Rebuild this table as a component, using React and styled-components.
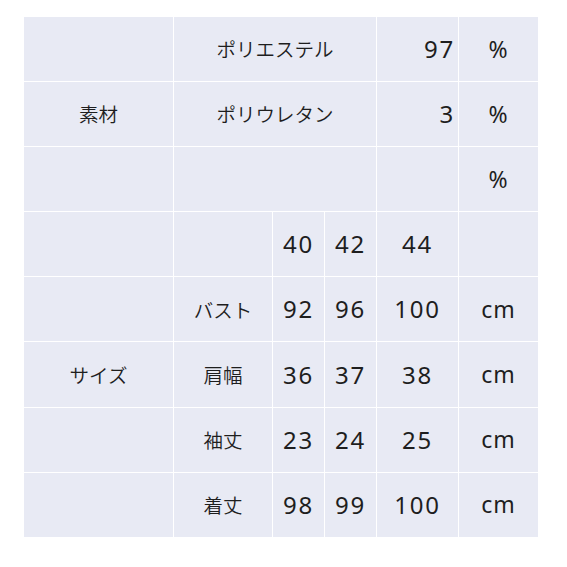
import React from "react";
import styled, { createGlobalStyle } from "styled-components";

const GlobalStyle = createGlobalStyle`
  html, body {
    margin: 0;
    background: #ffffff;
  }
  body {
    padding: 16px 0 0 23px;
    font-family: "Noto Sans CJK JP", sans-serif;
    color: #1e1e1e;
  }
`;

const Table = styled.table`
  width: 515px;
  border-collapse: collapse;
  table-layout: fixed;
  background: #e8eaf4;
`;

const Col = styled.col`
  width: ${(p) => p.$w}px;
`;

const Cell = styled.td`
  height: 64.1px;
  padding: 0 ${(p) => (p.$align === "right" ? "3px" : "0")} 0 0;
  border: 1px solid #ffffff;
  text-align: ${(p) => p.$align || "center"};
  vertical-align: middle;
  font-size: 19.5px;
  font-weight: 350;
  line-height: 1;
`;

const Num = styled.span`
  font-family: "Noto Sans", sans-serif;
  font-size: 24px;
  letter-spacing: 1.8px;
  font-weight: 400;
`;

const Unit = styled.span`
  font-family: "Noto Sans", sans-serif;
  font-weight: 400;
  font-size: 23px;
  letter-spacing: 1px;
`;

const sizeRows = [
  { label: "", name: "", v: ["40", "42", "44"], unit: "" },
  { label: "", name: "バスト", v: ["92", "96", "100"], unit: "cm" },
  { label: "サイズ", name: "肩幅", v: ["36", "37", "38"], unit: "cm" },
  { label: "", name: "袖丈", v: ["23", "24", "25"], unit: "cm" },
  { label: "", name: "着丈", v: ["98", "99", "100"], unit: "cm" },
];

const materialRows = [
  { label: "", name: "ポリエステル", pct: "97" },
  { label: "素材", name: "ポリウレタン", pct: "3" },
  { label: "", name: "", pct: "" },
];

export default function App() {
  return (
    <>
      <GlobalStyle />
      <Table>
        <colgroup>
          <Col $w={150} />
          <Col $w={99} />
          <Col $w={52} />
          <Col $w={52} />
          <Col $w={82} />
          <Col $w={80} />
        </colgroup>
        <tbody>
          {materialRows.map((r, i) => (
            <tr key={"m" + i}>
              <Cell>{r.label}</Cell>
              <Cell colSpan={3}>{r.name}</Cell>
              <Cell $align="right">
                <Num>{r.pct}</Num>
              </Cell>
              <Cell>
                <Unit>%</Unit>
              </Cell>
            </tr>
          ))}
          {sizeRows.map((r, i) => (
            <tr key={"s" + i}>
              <Cell>{r.label}</Cell>
              <Cell>{r.name}</Cell>
              {r.v.map((v, j) => (
                <Cell key={j}>
                  <Num>{v}</Num>
                </Cell>
              ))}
              <Cell>
                <Unit>{r.unit}</Unit>
              </Cell>
            </tr>
          ))}
        </tbody>
      </Table>
    </>
  );
}
